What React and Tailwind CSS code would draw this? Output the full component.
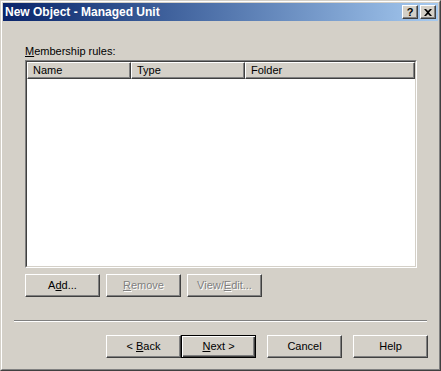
const font = { fontFamily: '"Liberation Sans", Arial, sans-serif' };

function Btn({ children, className = '', disabled, isDefault }) {
  return (
    <div
      className={`flex h-[23px] items-center justify-center bg-[#d4d0c8] text-[11px] ${
        isDefault
          ? 'border border-black shadow-[inset_1px_1px_#ffffff,inset_-1px_-1px_#404040,inset_-2px_-2px_#808080]'
          : 'border border-b-[#404040] border-l-white border-r-[#404040] border-t-white shadow-[inset_-1px_-1px_#808080]'
      } ${disabled ? 'text-[#808080] [text-shadow:1px_1px_#ffffff]' : 'text-black'} ${className}`}
    >
      <span>{children}</span>
    </div>
  );
}

function HeadCell({ children, className = '' }) {
  return (
    <div
      className={`flex h-[17px] items-center border border-b-[#404040] border-l-white border-r-[#404040] border-t-white bg-[#d4d0c8] pl-[5px] text-[11px] shadow-[inset_-1px_-1px_#808080] ${className}`}
    >
      {children}
    </div>
  );
}

export default function App() {
  return (
    <div style={font} className="h-[371px] w-[441px] border border-b-[#404040] border-l-[#d4d0c8] border-r-[#404040] border-t-[#d4d0c8] bg-[#d4d0c8]">
      <div className="flex h-full flex-col border border-b-[#808080] border-l-white border-r-[#808080] border-t-white p-px">
        <div className="flex h-[18px] items-center justify-between bg-gradient-to-r from-[#0a246a] to-[#a6caf0] pl-[2px] pr-[2px]">
          <span className="text-[12px] font-bold text-white">New Object - Managed Unit</span>
          <div className="flex gap-[2px]">
            <div className="flex h-[14px] w-[16px] items-center justify-center border border-b-[#404040] border-l-white border-r-[#404040] border-t-white bg-[#d4d0c8] text-[11px] font-bold leading-none text-black shadow-[inset_-1px_-1px_#808080]">
              ?
            </div>
            <div className="flex h-[14px] w-[16px] items-center justify-center border border-b-[#404040] border-l-white border-r-[#404040] border-t-white bg-[#d4d0c8] shadow-[inset_-1px_-1px_#808080]">
              <svg width="8" height="7" viewBox="0 0 8 7">
                <path d="M0 0h2l2 2 2-2h2L5 3.5 8 7H6L4 5 2 7H0l3-3.5z" fill="black" />
              </svg>
            </div>
          </div>
        </div>

        <div className="flex flex-1 flex-col px-[22px] pt-[23px]">
          <div className="h-[16px] text-[11px] leading-[14px]">
            <span className="underline">M</span>embership rules:
          </div>
          <div className="h-[208px] w-[392px] border border-b-white border-l-[#808080] border-r-white border-t-[#808080]">
            <div className="h-full border border-b-[#d4d0c8] border-l-[#404040] border-r-[#d4d0c8] border-t-[#404040] bg-white">
              <div className="flex">
                <HeadCell className="w-[104px]">Name</HeadCell>
                <HeadCell className="w-[114px]">Type</HeadCell>
                <HeadCell className="w-[170px]">Folder</HeadCell>
              </div>
            </div>
          </div>
          <div className="mt-[6px] flex gap-[6px]">
            <Btn className="w-[75px]">
              A<span className="underline">d</span>d...
            </Btn>
            <Btn className="w-[75px]" disabled>
              <span className="underline">R</span>emove
            </Btn>
            <Btn className="w-[75px]" disabled>
              View/<span className="underline">E</span>dit...
            </Btn>
          </div>
        </div>

        <div className="mx-[11px] h-[2px] border-b border-t border-b-white border-t-[#808080]" />

        <div className="flex justify-end gap-[11px] pb-[10px] pr-[10px] pt-[13px]">
          <div className="flex">
            <Btn className="w-[75px]">
              {'< '}
              <span className="underline">B</span>ack
            </Btn>
            <Btn className="w-[75px]" isDefault>
              <span className="underline">N</span>ext {'>'}
            </Btn>
          </div>
          <Btn className="w-[75px]">Cancel</Btn>
          <Btn className="w-[75px]">Help</Btn>
        </div>
      </div>
    </div>
  );
}
